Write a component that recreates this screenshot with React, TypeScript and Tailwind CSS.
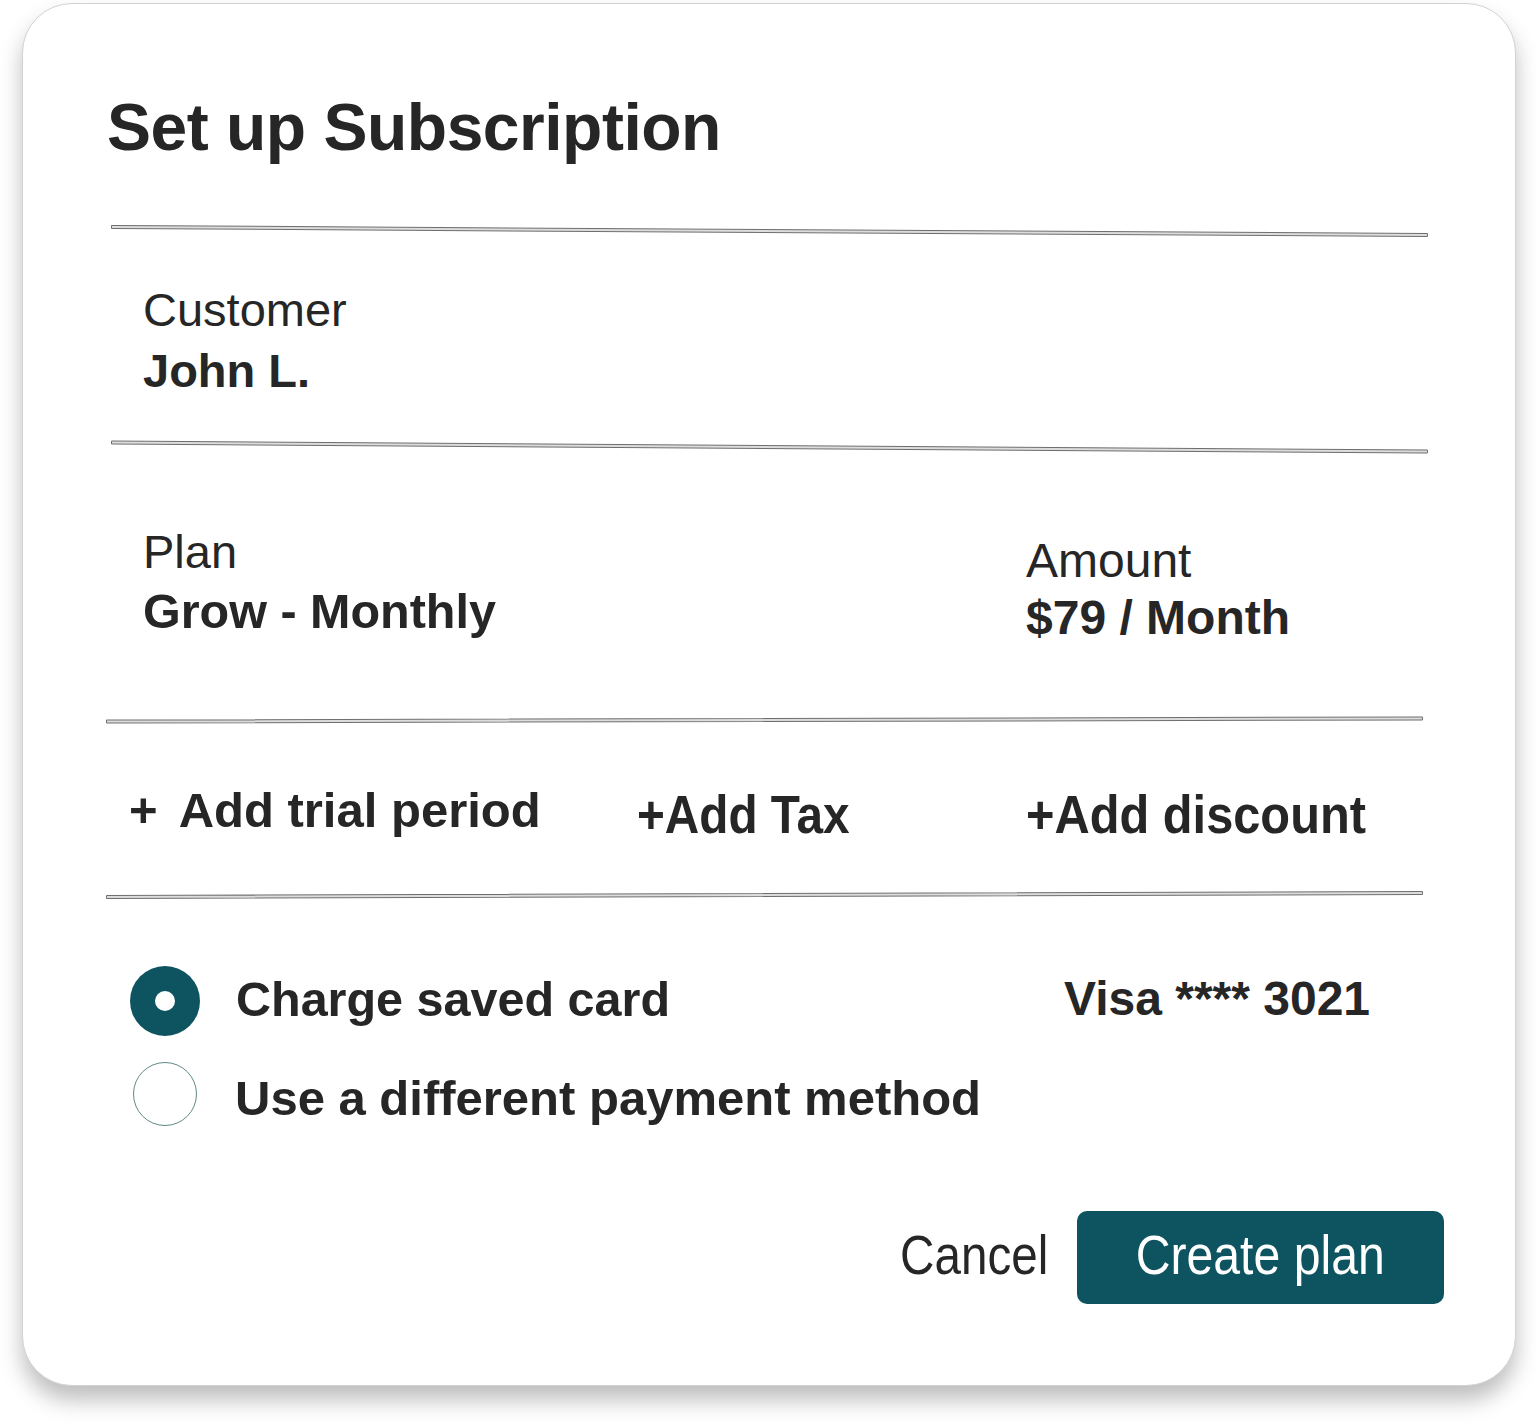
import React from 'react';

const ink = 'text-[#262626]';

function Rule({ className }: { className: string }) {
  return <div className={`h-[4px] w-[1317px] rounded-[1px] border border-[#6f6f6f] bg-[#dcdcdc] ${className}`} />;
}

function Radio({ checked }: { checked: boolean }) {
  return (
    <div className="flex w-[70px] shrink-0 items-center justify-center">
      {checked ? (
        <div className="flex h-[70px] w-[70px] items-center justify-center rounded-full bg-[#0d5360]">
          <div className="h-[20px] w-[20px] rounded-full bg-white" />
        </div>
      ) : (
        <div className="h-[64px] w-[64px] rounded-full border-[1.5px] border-[#5f8a86] bg-white" />
      )}
    </div>
  );
}

export default function App() {
  return (
    <div className={`min-h-[1424px] bg-white pl-[22px] pt-[3px] font-['Liberation_Sans',Arial,sans-serif] ${ink}`}>
      <div className="flex h-[1383px] w-[1494px] flex-col rounded-[50px] border border-[#d2d2d2] bg-white shadow-[0_14px_22px_rgba(0,0,0,0.26)]">
        <h1 className="ml-[84px] mt-[90px] text-[66px] font-bold leading-[66px] tracking-[-0.5px]">
          Set up Subscription
        </h1>

        <Rule className="ml-[88px] mt-[69px] rotate-[0.35deg]" />

        <div className="ml-[120px] mt-[49px]">
          <div className="text-[47px] leading-[56px]">Customer</div>
          <div className="mt-[3px] text-[47px] font-bold leading-[60px]">John L.</div>
        </div>

        <Rule className="ml-[88px] mt-[44px] rotate-[0.39deg]" />

        <div className="ml-[120px] mt-[75px] flex items-start">
          <div className="w-[883px]">
            <div className="text-[47px] leading-[56px]">Plan</div>
            <div className="mt-[3px] text-[48.5px] font-bold leading-[56px]">Grow - Monthly</div>
          </div>
          <div className="mt-[9px]">
            <div className="text-[48px] leading-[56px]">Amount</div>
            <div className="mt-[1px] text-[48px] font-bold leading-[56px]">$79 / Month</div>
          </div>
        </div>

        <Rule className="ml-[83px] mt-[72px] -rotate-[0.13deg]" />

        <div className="ml-[106px] mt-[60px] flex items-start font-bold">
          <button className="w-[508px] text-left text-[49px] leading-[56px]">
            <span className="mr-[21px]">+</span>Add trial period
          </button>
          <button className="mt-[5px] w-[389px] text-left text-[53px] leading-[56px]">
            <span className="inline-block origin-left scale-x-[0.9]">+Add Tax</span>
          </button>
          <button className="mt-[5px] text-left text-[53px] leading-[56px]">
            <span className="inline-block origin-left scale-x-[0.92]">+Add discount</span>
          </button>
        </div>

        <Rule className="ml-[83px] mt-[50px] -rotate-[0.17deg]" />

        <div className="ml-[107px] mt-[69px] flex items-center">
          <Radio checked />
          <div className="-mt-[4px] ml-[36px] w-[828px] text-[48.5px] font-bold leading-[56px]">Charge saved card</div>
          <div className="-mt-[4px] text-[48px] font-bold leading-[56px]">Visa **** 3021</div>
        </div>

        <div className="ml-[107px] mt-[26px] flex items-center">
          <Radio checked={false} />
          <div className="ml-[35px] mt-[8px] text-[49px] font-bold leading-[56px]">Use a different payment method</div>
        </div>

        <div className="mr-[71px] mt-[85px] flex items-start justify-end">
          <button className="mr-[29px] mt-[17px] text-[55px] leading-[55px]">
            <span className="inline-block origin-right scale-x-[0.865]">Cancel</span>
          </button>
          <button className="flex h-[93px] w-[367px] items-start justify-center rounded-[10px] bg-[#0d5360] pt-[17px] text-[55px] leading-[55px] text-white">
            <span className="inline-block scale-x-[0.876]">Create plan</span>
          </button>
        </div>
      </div>
    </div>
  );
}
